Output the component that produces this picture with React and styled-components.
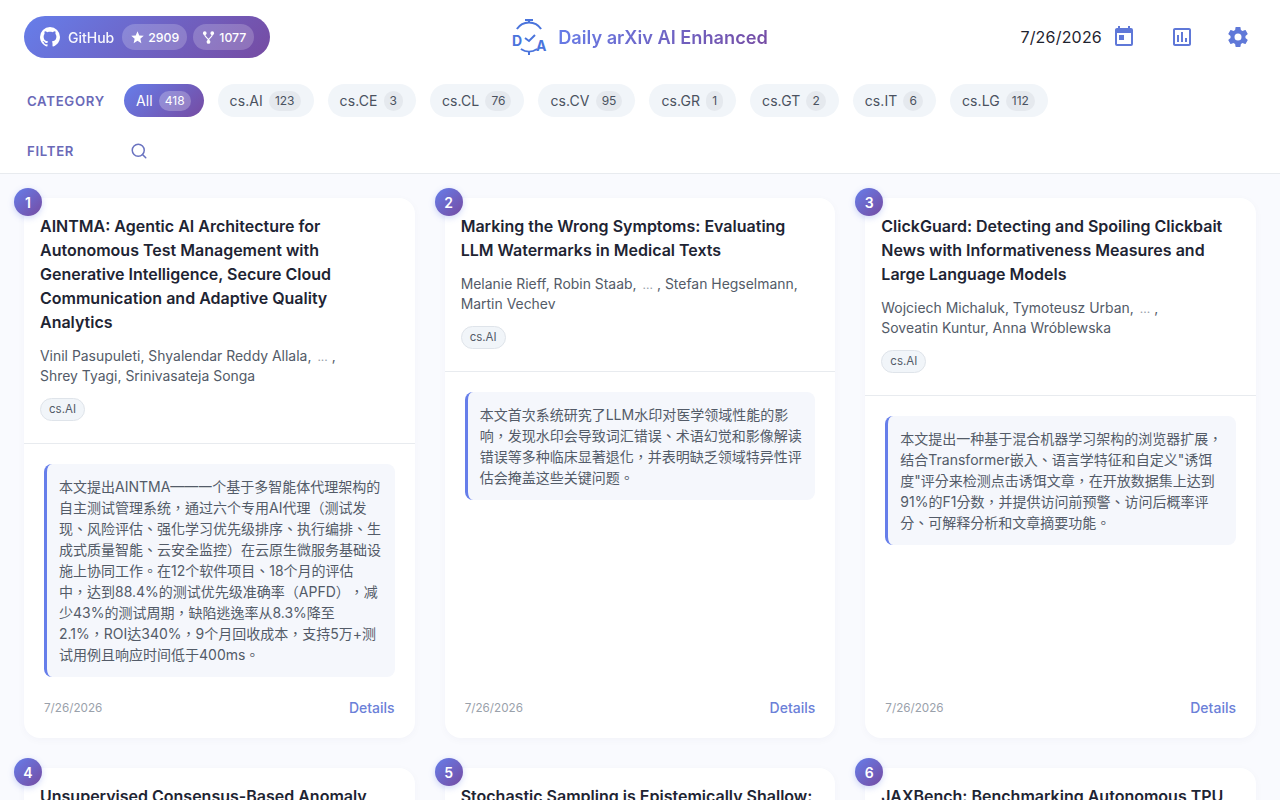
import React from "react";
import styled, { createGlobalStyle } from "styled-components";
import { Search } from "lucide-react";

const GRADIENT = "linear-gradient(135deg, #667eea 0%, #764ba2 100%)";

const GlobalStyle = createGlobalStyle`
  html, body {
    margin: 0;
    padding: 0;
    height: 100%;
    overflow: hidden;
    background: #f9fafe;
    font-family: Inter, "Noto Sans CJK TC", sans-serif;
    font-optical-sizing: none;
  }
  * {
    box-sizing: border-box;
  }
`;

const Page = styled.div`
  height: 800px;
  overflow: hidden;
  display: flex;
  flex-direction: column;
`;

const Header = styled.header`
  background: #ffffff;
  border-bottom: 1px solid #e8ebef;
  padding: 16px 24px 0;
  height: 174px;
  flex-shrink: 0;
`;

const TopBar = styled.div`
  display: grid;
  grid-template-columns: 1fr auto 1fr;
  align-items: center;
  height: 42px;
`;

const GithubBadge = styled.a`
  justify-self: start;
  display: flex;
  align-items: center;
  height: 42px;
  padding: 0 16px 0 14px;
  border-radius: 21px;
  background: ${GRADIENT};
  color: #fff;
  font-size: 14px;
  font-weight: 500;
`;

const GithubLabel = styled.span`
  margin: 0 8px 0 6px;
  opacity: 0.95;
`;

const StatPill = styled.span`
  display: flex;
  align-items: center;
  gap: 3px;
  height: 26px;
  padding: 0 8px;
  margin-right: 6px;
  border-radius: 13px;
  background: rgba(255, 255, 255, 0.2);
  font-size: 12.3px;
  &:last-child {
    margin-right: 0;
  }
`;

const Brand = styled.div`
  display: flex;
  align-items: center;
  gap: 9px;
`;

const BrandTitle = styled.h1`
  margin: 0;
  font-size: 18.2px;
  font-weight: 600;
  background: ${GRADIENT};
  -webkit-background-clip: text;
  background-clip: text;
  color: transparent;
`;

const Actions = styled.div`
  justify-self: end;
  display: flex;
  align-items: center;
  padding-right: 6px;
`;

const DateText = styled.span`
  font-size: 16px;
  letter-spacing: 0.2px;
  color: #1f2430;
  margin-right: 10px;
`;

const IconSpot = styled.span`
  display: flex;
  color: #5f78d8;
  margin-left: ${(p) => p.$gap || 0}px;
`;

const FilterRow = styled.div`
  display: flex;
  align-items: center;
  height: 33px;
  margin-top: ${(p) => p.$top}px;
`;

const RowLabel = styled.span`
  width: 100px;
  padding-left: 3px;
  flex-shrink: 0;
  font-size: 13.2px;
  font-weight: 600;
  letter-spacing: 0.7px;
  color: #6a69b8;
`;

const Chips = styled.div`
  display: flex;
  gap: 14px;
`;

const Chip = styled.button`
  display: flex;
  align-items: center;
  gap: 6px;
  height: 33px;
  padding: 0 13px 0 12px;
  border: 0;
  border-radius: 17px;
  font-family: inherit;
  font-size: 14px;
  letter-spacing: 0.1px;
  color: ${(p) => (p.$active ? "#fff" : "#4a5260")};
  background: ${(p) => (p.$active ? GRADIENT : "#f1f5f9")};
`;

const ChipCount = styled.span`
  display: flex;
  align-items: center;
  height: 20px;
  padding: 0 6px;
  border-radius: 10px;
  font-size: 12px;
  letter-spacing: 0;
  color: ${(p) => (p.$active ? "#fff" : "#4a5260")};
  background: ${(p) => (p.$active ? "rgba(255,255,255,0.25)" : "#e5e9ee")};
`;

const SearchSpot = styled.span`
  display: flex;
  margin-left: 6px;
  color: #6a73c0;
`;

const Grid = styled.main`
  display: grid;
  grid-template-columns: repeat(3, 1fr);
  gap: 30px;
  padding: 24px 24px 0;
`;

const Card = styled.article`
  position: relative;
  display: flex;
  flex-direction: column;
  height: ${(p) => p.$height}px;
  background: #fff;
  border-radius: 16px;
  box-shadow: 0 2px 8px rgba(30, 40, 80, 0.03);
`;

const NumberBadge = styled.span`
  position: absolute;
  left: -10px;
  top: -10px;
  width: 28px;
  height: 28px;
  display: flex;
  align-items: center;
  justify-content: center;
  border-radius: 50%;
  background: ${GRADIENT};
  color: #fff;
  font-size: 14px;
  font-weight: 600;
  box-shadow: 0 2px 6px rgba(102, 126, 234, 0.3);
`;

const CardHead = styled.div`
  padding: 16px 16px 22px;
  border-bottom: 1px solid #e8ebef;
`;

const CardTitle = styled.h2`
  margin: 0 0 12px;
  font-size: 16px;
  font-weight: 600;
  line-height: 24px;
  color: #1e2433;
`;

const Authors = styled.p`
  margin: 0 0 11px;
  font-size: 13.95px;
  line-height: 20px;
  color: #535b68;
`;

const Ellipsis = styled.span`
  margin: 0 4px 0 6px;
  font-size: 12px;
  line-height: 1;
  color: #9aa1ab;
`;

const Tag = styled.span`
  display: inline-block;
  height: 23px;
  padding: 0 8px;
  border: 1px solid #dfe4ea;
  border-radius: 12px;
  background: #f1f5f9;
  font-size: 11.5px;
  line-height: 21px;
  color: #535b68;
`;

const CardBody = styled.div`
  flex: 1;
  display: flex;
  flex-direction: column;
  padding: 20px 20px 22px;
`;

const Summary = styled.p`
  margin: 0;
  padding: 12px;
  border-left: 3px solid #667eea;
  border-radius: 8px;
  background: #f5f7fc;
  font-size: 14px;
  line-height: 21px;
  text-spacing-trim: space-all;
  white-space: pre-line;
  color: #535b68;
`;

const CardFooter = styled.div`
  margin-top: auto;
  display: flex;
  align-items: center;
  justify-content: space-between;
`;

const CardDate = styled.span`
  font-size: 11.7px;
  color: #9aa1ab;
`;

const DetailsLink = styled.a`
  font-size: 14px;
  font-weight: 500;
  color: #6b80d8;
`;

const MdiIcon = ({ d, size = 24 }) => (
  <svg width={size} height={size} viewBox="0 0 24 24" fill="currentColor">
    <path d={d} />
  </svg>
);

const ICONS = {
  github:
    "M12,2A10,10 0 0,0 2,12C2,16.42 4.87,20.17 8.84,21.5C9.34,21.58 9.5,21.27 9.5,21C9.5,20.77 9.5,20.14 9.5,19.31C6.73,19.91 6.14,17.97 6.14,17.97C5.68,16.81 5.03,16.5 5.03,16.5C4.12,15.88 5.1,15.9 5.1,15.9C6.1,15.97 6.63,16.93 6.63,16.93C7.5,18.45 8.97,18 9.54,17.76C9.63,17.11 9.89,16.67 10.17,16.42C7.95,16.17 5.62,15.31 5.62,11.5C5.62,10.39 6,9.5 6.65,8.79C6.55,8.54 6.2,7.5 6.75,6.15C6.75,6.15 7.59,5.88 9.5,7.17C10.29,6.95 11.15,6.84 12,6.84C12.85,6.84 13.71,6.95 14.5,7.17C16.41,5.88 17.25,6.15 17.25,6.15C17.8,7.5 17.45,8.54 17.35,8.79C18,9.5 18.38,10.39 18.38,11.5C18.38,15.32 16.04,16.16 13.81,16.41C14.17,16.72 14.5,17.33 14.5,18.26C14.5,19.6 14.5,20.68 14.5,21C14.5,21.27 14.66,21.59 15.17,21.5C19.14,20.16 22,16.42 22,12A10,10 0 0,0 12,2Z",
  star: "M12,17.27L18.18,21L16.54,13.97L22,9.24L14.81,8.62L12,2L9.19,8.62L2,9.24L7.45,13.97L5.82,21L12,17.27Z",
  fork: "M6,2A3,3 0 0,1 9,5C9,6.28 8.19,7.38 7.06,7.81C7.15,8.27 7.39,8.83 8,9.63C9,10.92 11,12.83 12,14.17C13,12.83 15,10.92 16,9.63C16.61,8.83 16.85,8.27 16.94,7.81C15.81,7.38 15,6.28 15,5A3,3 0 0,1 18,2A3,3 0 0,1 21,5C21,6.32 20.14,7.45 18.95,7.85C18.87,8.37 18.64,9 18,9.83C17,11.17 15,13.08 14,14.38C13.39,15.17 13.15,15.73 13.06,16.19C14.19,16.62 15,17.72 15,19A3,3 0 0,1 12,22A3,3 0 0,1 9,19C9,17.72 9.81,16.62 10.94,16.19C10.85,15.73 10.61,15.17 10,14.38C9,13.08 7,11.17 6,9.83C5.36,9 5.13,8.37 5.05,7.85C3.86,7.45 3,6.32 3,5A3,3 0 0,1 6,2Z",
  calendar:
    "M7,10H12V15H7M19,19H5V8H19M19,3H18V1H16V3H8V1H6V3H5C3.89,3 3,3.9 3,5V19A2,2 0 0,0 5,21H19A2,2 0 0,0 21,19V5A2,2 0 0,0 19,3Z",
  chart:
    "M9 17H7V10H9V17M13 17H11V7H13V17M17 17H15V13H17V17M19 19H5V5H19V19.1M19 3H5C3.9 3 3 3.9 3 5V19C3 20.1 3.9 21 5 21H19C20.1 21 21 20.1 21 19V5C21 3.9 20.1 3 19 3Z",
  cog: "M12,15.5A3.5,3.5 0 0,1 8.5,12A3.5,3.5 0 0,1 12,8.5A3.5,3.5 0 0,1 15.5,12A3.5,3.5 0 0,1 12,15.5M19.43,12.97C19.47,12.65 19.5,12.33 19.5,12C19.5,11.67 19.47,11.34 19.43,11L21.54,9.37C21.73,9.22 21.78,8.95 21.66,8.73L19.66,5.27C19.54,5.05 19.27,4.96 19.05,5.05L16.56,6.05C16.04,5.66 15.5,5.32 14.87,5.07L14.5,2.42C14.46,2.18 14.25,2 14,2H10C9.75,2 9.54,2.18 9.5,2.42L9.13,5.07C8.5,5.32 7.96,5.66 7.44,6.05L4.95,5.05C4.73,4.96 4.46,5.05 4.34,5.27L2.34,8.73C2.21,8.95 2.27,9.22 2.46,9.37L4.57,11C4.53,11.34 4.5,11.67 4.5,12C4.5,12.33 4.53,12.65 4.57,12.97L2.46,14.63C2.27,14.78 2.21,15.05 2.34,15.27L4.34,18.73C4.46,18.95 4.73,19.03 4.95,18.95L7.44,17.94C7.96,18.34 8.5,18.68 9.13,18.93L9.5,21.58C9.54,21.82 9.75,22 10,22H14C14.25,22 14.46,21.82 14.5,21.58L14.87,18.93C15.5,18.67 16.04,18.34 16.56,17.94L19.05,18.95C19.27,19.03 19.54,18.95 19.66,18.73L21.66,15.27C21.78,15.05 21.73,14.78 21.54,14.63L19.43,12.97Z",
};

const Logo = () => (
  <svg width="37" height="37" viewBox="0 0 37 37" fill="none" stroke="#4a74dc" strokeWidth="2">
    <path d="M4.9 10A14.5 14.5 0 0 1 29.1 10" />
    <path d="M8.9 30A14.5 14.5 0 0 0 25.1 30" />
    <path d="M17 1V4M13 1H21M17 32.5V36" />
    <path d="M13 19L17 22L23 16" />
    <text x="0" y="27" fontFamily="Inter, sans-serif" fontSize="14" fontWeight="700" fill="#4a74dc" stroke="none">
      D
    </text>
    <text x="24" y="31.5" fontFamily="Inter, sans-serif" fontSize="14" fontWeight="700" fill="#4a74dc" stroke="none">
      A
    </text>
  </svg>
);

const CATEGORIES = [
  ["All", 418],
  ["cs.AI", 123],
  ["cs.CE", 3],
  ["cs.CL", 76],
  ["cs.CV", 95],
  ["cs.GR", 1],
  ["cs.GT", 2],
  ["cs.IT", 6],
  ["cs.LG", 112],
];

const PAPERS = [
  {
    title:
      "AINTMA: Agentic AI Architecture for Autonomous Test Management with Generative Intelligence, Secure Cloud Communication and Adaptive Quality Analytics",
    first: "Vinil Pasupuleti, Shyalendar Reddy Allala,",
    rest: [",", "Shrey Tyagi, Srinivasateja Songa"],
    summary:
      "本文提出AINTMA——一个基于多智能体代理架构的自主测试管理系统，通过六个专用AI代理（测试发现、风险评估、强化学习优先级排序、执行编排、生成式质量智能、云安全监控）在云原生微服务基础设施上协同工作。在12个软件项目、18个月的评估\n中，达到88.4%的测试优先级准确率（APFD），减少43%的测试周期，缺陷逃逸率从8.3%降至\n2.1%，ROI达340%，9个月回收成本，支持5万+测试用例且响应时间低于400ms。",
  },
  {
    title: "Marking the Wrong Symptoms: Evaluating LLM Watermarks in Medical Texts",
    first: "Melanie Rieff, Robin Staab,",
    rest: [", Stefan Hegselmann,", "Martin Vechev"],
    summary:
      "本文首次系统研究了LLM水印对医学领域性能的影响，发现水印会导致词汇错误、术语幻觉和影像解读错误等多种临床显著退化，并表明缺乏领域特异性评估会掩盖这些关键问题。",
  },
  {
    title:
      "ClickGuard: Detecting and Spoiling Clickbait News with Informativeness Measures and Large Language Models",
    first: "Wojciech Michaluk, Tymoteusz Urban,",
    rest: [",", "Soveatin Kuntur, Anna Wróblewska"],
    summary:
      "本文提出一种基于混合机器学习架构的浏览器扩展，结合Transformer嵌入、语言学特征和自定义\"诱饵度\"评分来检测点击诱饵文章，在开放数据集上达到91%的F1分数，并提供访问前预警、访问后概率评分、可解释分析和文章摘要功能。",
  },
  { title: "Unsupervised Consensus-Based Anomaly" },
  { title: "Stochastic Sampling is Epistemically Shallow:" },
  { title: "JAXBench: Benchmarking Autonomous TPU" },
];

const PaperCard = ({ paper, index }) => (
  <Card $height={540}>
    <NumberBadge>{index + 1}</NumberBadge>
    <CardHead>
      <CardTitle>{paper.title}</CardTitle>
      {paper.first && (
        <>
          <Authors>
            {paper.first}
            <Ellipsis>...</Ellipsis>
            {paper.rest[0]}
            <br />
            {paper.rest[1]}
          </Authors>
          <Tag>cs.AI</Tag>
        </>
      )}
    </CardHead>
    {paper.summary && (
      <CardBody>
        <Summary>{paper.summary}</Summary>
        <CardFooter>
          <CardDate>7/26/2026</CardDate>
          <DetailsLink>Details</DetailsLink>
        </CardFooter>
      </CardBody>
    )}
  </Card>
);

export default function App() {
  return (
    <Page>
      <GlobalStyle />
      <Header>
        <TopBar>
          <GithubBadge>
            <MdiIcon d={ICONS.github} />
            <GithubLabel>GitHub</GithubLabel>
            <StatPill>
              <MdiIcon d={ICONS.star} size={15} />
              2909
            </StatPill>
            <StatPill>
              <MdiIcon d={ICONS.fork} size={15} />
              1077
            </StatPill>
          </GithubBadge>
          <Brand>
            <Logo />
            <BrandTitle>Daily arXiv AI Enhanced</BrandTitle>
          </Brand>
          <Actions>
            <DateText>7/26/2026</DateText>
            <IconSpot>
              <MdiIcon d={ICONS.calendar} />
            </IconSpot>
            <IconSpot $gap={34}>
              <MdiIcon d={ICONS.chart} />
            </IconSpot>
            <IconSpot $gap={32}>
              <MdiIcon d={ICONS.cog} />
            </IconSpot>
          </Actions>
        </TopBar>
        <FilterRow $top={26}>
          <RowLabel>CATEGORY</RowLabel>
          <Chips>
            {CATEGORIES.map(([name, count], i) => (
              <Chip key={name} $active={i === 0}>
                {name}
                <ChipCount $active={i === 0}>{count}</ChipCount>
              </Chip>
            ))}
          </Chips>
        </FilterRow>
        <FilterRow $top={17}>
          <RowLabel>FILTER</RowLabel>
          <SearchSpot>
            <Search size={18} strokeWidth={2} />
          </SearchSpot>
        </FilterRow>
      </Header>
      <Grid>
        {PAPERS.map((paper, i) => (
          <PaperCard key={paper.title} paper={paper} index={i} />
        ))}
      </Grid>
    </Page>
  );
}
